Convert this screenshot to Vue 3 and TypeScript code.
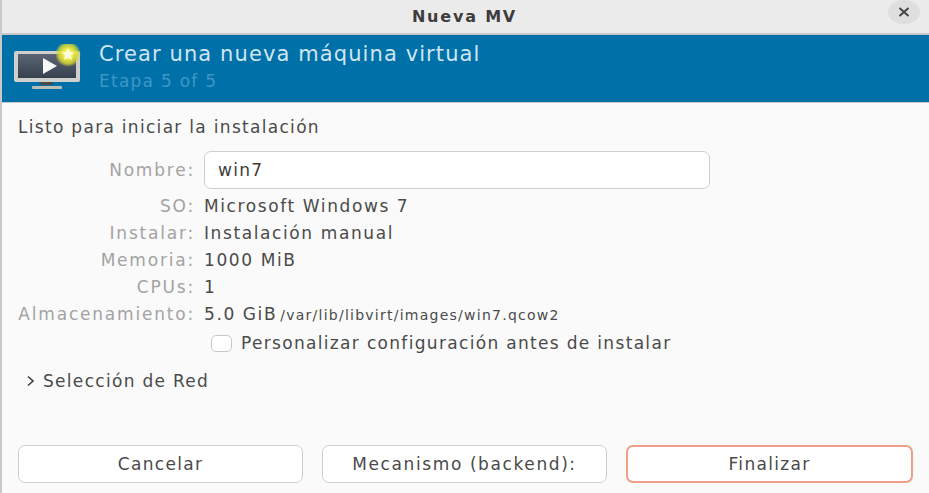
<script setup lang="ts">
interface Row { label: string; value: string; small?: string }
const rows: Row[] = [
  { label: 'SO:', value: 'Microsoft Windows 7' },
  { label: 'Instalar:', value: 'Instalación manual' },
  { label: 'Memoria:', value: '1000 MiB' },
  { label: 'CPUs:', value: '1' },
  { label: 'Almacenamiento:', value: '5.0 GiB', small: '/var/lib/libvirt/images/win7.qcow2' },
]
</script>

<template>
  <div class="win">
    <header class="titlebar">
      <span class="title">Nueva MV</span>
      <span class="close">
        <svg width="12" height="12" viewBox="0 0 12 12"><path d="M1.500 2 L10.500 10 M10.500 2 L1.500 10" stroke="#454545" stroke-width="2" fill="none" /></svg>
      </span>
    </header>
    <section class="banner">
      <svg class="logo" width="72" height="50" viewBox="0 0 72 50">
        <defs>
          <radialGradient id="glow"><stop offset="0.35" stop-color="#f4f04a" /><stop offset="0.75" stop-color="#d6d92e" stop-opacity="0.8" /><stop offset="1" stop-color="#d6d92e" stop-opacity="0" /></radialGradient>
          <linearGradient id="scr" x1="0" y1="0" x2="0" y2="1"><stop offset="0" stop-color="#5a6474" /><stop offset="1" stop-color="#37404e" /></linearGradient>
        </defs>
        <rect x="0" y="7" width="66" height="31" rx="2" fill="#cfcfcb" />
        <rect x="4" y="10" width="58" height="24" fill="url(#scr)" />
        <path d="M29 14 L43 22 L29 30 Z" fill="#f6f6f6" />
        <rect x="26" y="38" width="13" height="3" fill="#4a4a46" />
        <rect x="18" y="42" width="30" height="3" rx="1" fill="#bdbdb8" />
        <circle cx="54" cy="10" r="13" fill="url(#glow)" />
        <path d="M54 4 L56 8 L60 8.500 L57 11.500 L58 16 L54 13.500 L50 16 L51 11.500 L48 8.500 L52 8 Z" fill="#fbfbe0" />
      </svg>
      <div class="banner-text">
        <div class="h1">Crear una nueva máquina virtual</div>
        <div class="h2">Etapa 5 of 5</div>
      </div>
    </section>
    <main class="body">
      <div class="lead">Listo para iniciar la instalación</div>
      <div class="form">
        <span class="lbl name-lbl">Nombre:</span>
        <div class="entry">win7</div>
        <template v-for="r in rows" :key="r.label">
          <span class="lbl">{{ r.label }}</span>
          <span class="val">{{ r.value }}<small v-if="r.small">{{ r.small }}</small></span>
        </template>
        <span></span>
        <label class="check"><i class="box"></i>Personalizar configuración antes de instalar</label>
      </div>
      <div class="expander">
        <svg width="10" height="12" viewBox="0 0 10 12"><path d="M2 1.500 L7 6 L2 10.500" stroke="#3d3d3d" stroke-width="1.600" fill="none" /></svg>
        <span>Selección de Red</span>
      </div>
    </main>
    <footer class="actions">
      <button class="btn">Cancelar</button>
      <button class="btn wide">Mecanismo (backend):</button>
      <button class="btn primary">Finalizar</button>
    </footer>
  </div>
</template>

<style>
html, body { margin: 0; background: #fafafa; }
</style>

<style scoped>
.win {
  width: 929px; height: 493px; box-sizing: border-box; display: flex; flex-direction: column;
  background: #fafafa; border-left: 2px solid #c9c9c9;
  font-family: "DejaVu Sans", "Noto Sans", sans-serif; font-size: 17px; color: #4a4a4a;
  letter-spacing: 1.3px; overflow: hidden;
}
.titlebar {
  height: 33px; flex: none; background: #ebebeb; border-bottom: 2px solid #c8c8c8;
  position: relative; display: flex; align-items: center; justify-content: center; margin-left: -2px;
}
.title { font-weight: 700; font-size: 16px; color: #3d3d3d; letter-spacing: 1.800px; }
.close {
  position: absolute; left: 888px; top: 0; width: 32px; height: 24px; border-radius: 50%;
  background: #dedede; display: flex; align-items: center; justify-content: center;
}
.banner {
  height: 68px; flex: none; background: #0070a8; display: flex; align-items: flex-start;
  border-bottom: 1px solid #c9c9c9; box-sizing: border-box;
}
.logo { margin: 9px 0 0 12px; flex: none; }
.banner-text { margin: 6px 0 0 13px; }
.h1 { font-size: 21px; line-height: 26px; color: #cfe6f2; letter-spacing: 1.100px; }
.h2 { font-size: 17px; line-height: 26px; color: #3d97c7; letter-spacing: 1.250px; margin-top: 1px; }
.body { flex: 1; padding: 13px 0 0 16px; }
.lead { line-height: 22px; }
.form {
  display: grid; grid-template-columns: 177px 1fr; grid-template-rows: 41px; grid-auto-rows: 27px;
  column-gap: 9px; align-items: center; margin-top: 13px;
}
.lbl { text-align: right; color: #a3a3a3; white-space: nowrap; letter-spacing: 1.800px; justify-self: end; }
.name-lbl { padding-bottom: 3px; }
.entry {
  width: 506px; height: 38px; box-sizing: border-box; border: 1px solid #cfcfcf; border-radius: 7px;
  background: #fff; padding: 0 13px; line-height: 36px; color: #3d3d3d; align-self: start;
}
.val { color: #4a4a4a; white-space: nowrap; letter-spacing: 1.600px; }
.val small { font-size: 14px; margin-left: 3px; letter-spacing: 1.250px; }
.check { display: flex; align-items: center; gap: 9px; margin: 5px 0 0 7px; white-space: nowrap; letter-spacing: 1.320px; }
.box {
  width: 21px; height: 17px; box-sizing: border-box; border: 1px solid #c8c8c8; border-radius: 5px;
  background: #fff; flex: none;
}
.expander { display: flex; align-items: center; gap: 7px; margin: 17px 0 0 8px; }
.actions { flex: none; display: flex; gap: 19px; padding: 0 16px 10px 16px; }
.btn {
  flex: 1 1 0; height: 38px; box-sizing: border-box; border: 1px solid #cfcfcf; border-radius: 7px; background: #fff;
  font: inherit; letter-spacing: 1.300px; color: #4a4a4a; padding: 0; white-space: nowrap;
}
.wide { letter-spacing: 1.600px; }
.primary { border: 2px solid #ee9f86; }
</style>
